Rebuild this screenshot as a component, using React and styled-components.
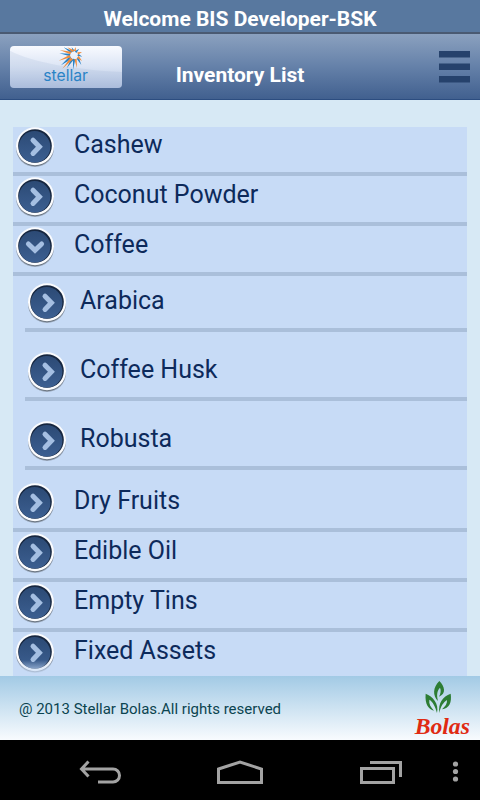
import React, { useState } from 'react'
import styled, { createGlobalStyle } from 'styled-components'

const items = [
  { name: 'Cashew' },
  { name: 'Coconut Powder' },
  { name: 'Coffee', children: ['Arabica', 'Coffee Husk', 'Robusta'] },
  { name: 'Dry Fruits' },
  { name: 'Edible Oil' },
  { name: 'Empty Tins' },
  { name: 'Fixed Assets' },
]

function RoundArrow({ open }) {
  return (
    <ArrowSvg viewBox="0 0 40 42" aria-hidden="true">
      <defs>
        <linearGradient id="disc" x1="0" y1="0" x2="0" y2="1">
          <stop offset="0" stopColor="#2c4a75" />
          <stop offset="1" stopColor="#3c5f91" />
        </linearGradient>
      </defs>
      <circle cx="20" cy="22" r="19" fill="#7b8695" opacity="0.6" />
      <circle cx="20" cy="21.6" r="18.6" fill="#5d6672" opacity="0.8" />
      <circle cx="20" cy="20.2" r="19" fill="#fbfcfe" />
      <circle cx="20" cy="20" r="16.8" fill="#16263f" />
      <circle cx="19.6" cy="20.8" r="15.800" fill="url(#disc)" />
      <Chevron d={open ? 'M13.400 18l6.600 6.200 6.600-6.200' : 'M18 14.200l6.400 6.600-6.400 6.600'} />
    </ArrowSvg>
  )
}

function StellarLogo() {
  return (
    <svg width="112" height="42" viewBox="0 0 336 126" role="img" aria-label="stellar">
      <path d="M0 14C70 50 190 70 336 78V126H0Z" fill="#8fa8d0" opacity="0.16" />
      <path
        fill="#2a83c6"
        d="M161 4L187 15L183 22ZM148 22L181 23L180 31ZM153 58L179 31L186 38ZM170 67L184 37L191 41ZM189 71L189 38L196 40ZM214 57L200 38L206 33ZM217 32L202 29L205 23ZM208 8L199 21L194 16ZM185 4L194 14L188 18Z"
      />
      <path
        fill="#f08c3c"
        d="M172 4L192 13L187 19ZM149 12L184 17L181 25ZM146 44L178 27L183 34ZM157 68L181 35L189 40ZM201 66L193 40L200 38ZM216 45L201 36L206 29ZM216 18L204 26L202 19ZM197 3L198 16L191 15Z"
      />
      <LogoText x="100" y="104">stellar</LogoText>
    </svg>
  )
}

function BolasLogo() {
  return (
    <svg width="62" height="64" viewBox="0 0 186 192" role="img" aria-label="Bolas">
      <g transform="translate(-6 5)" fill="#2d7d34" fillRule="evenodd">
        <path d="M88 10C68 30 68 54 84 70C80 54 80 40 90 30C94 38 92 48 87 57C110 48 104 26 88 10Z" />
        <path d="M47 48C44 80 56 94 72 99C62 88 56 78 58 66C68 72 76 86 81 106C88 78 68 56 47 48Z" />
        <path d="M122 48C98 56 84 76 88 106C92 86 100 74 111 67C112 78 106 86 96 95C118 92 126 74 122 48Z" />
      </g>
      <BolasText x="8" y="173">Bolas</BolasText>
    </svg>
  )
}

function App() {
  const [opened, setOpened] = useState('Coffee')

  return (
    <Screen>
      <GlobalStyle />
      <Welcome>Welcome BIS Developer-BSK</Welcome>
      <Header>
        <LogoButton>
          <StellarLogo />
        </LogoButton>
        <Title>Inventory List</Title>
        <MenuButton aria-label="Menu">
          <svg width="32" height="34" viewBox="0 0 32 34">
            <path d="M1 1h31v6.500H1zM1 13.500h31v6.500H1zM1 26h31v6.500H1z" fill="#26426c" />
          </svg>
        </MenuButton>
      </Header>
      <Main>
        <ListView>
          <List>
            {items.map((item) => (
              <li key={item.name}>
                <Row onClick={() => setOpened(opened === item.name ? '' : item.name)}>
                  <RoundArrow open={!!item.children && opened === item.name} />
                  <Label>{item.name}</Label>
                </Row>
                {item.children && opened === item.name && (
                  <SubList>
                    {item.children.map((child) => (
                      <li key={child}>
                        <Row>
                          <RoundArrow />
                          <Label $sub>{child}</Label>
                        </Row>
                      </li>
                    ))}
                  </SubList>
                )}
              </li>
            ))}
          </List>
        </ListView>
      </Main>
      <Footer>
        <p>@ 2013 Stellar Bolas.All rights reserved</p>
        <BolasLogo />
      </Footer>
      <SystemBar>
        <SystemButton aria-label="Back">
          <svg width="44" height="26" viewBox="0 0 44 26">
            <path d="M10.500 2.500l-7 7.500 7 7.500M3.500 10H35a6 6 0 0 1 0 13H20" />
          </svg>
        </SystemButton>
        <SystemButton aria-label="Home">
          <svg width="48" height="26" viewBox="0 0 48 26">
            <path d="M2.500 10L24 3l21.500 7v13.500h-43z" />
          </svg>
        </SystemButton>
        <SystemButton aria-label="Recent apps">
          <svg width="44" height="26" viewBox="0 0 44 26">
            <path d="M3.500 9.500h32v14h-32zM12 3.500h30.500v14.500" />
          </svg>
        </SystemButton>
        <SystemButton aria-label="More">
          <Dots width="10" height="24" viewBox="0 0 10 24">
            <circle cx="5.500" cy="4" r="2.600" />
            <circle cx="5.500" cy="11.500" r="2.600" />
            <circle cx="5.500" cy="19" r="2.600" />
          </Dots>
        </SystemButton>
      </SystemBar>
    </Screen>
  )
}

export default App

const GlobalStyle = createGlobalStyle`
* {
  box-sizing: border-box;
}
body {
  margin: 0;
  font-family: Roboto, 'Liberation Sans', sans-serif;
}
button {
  border: 0;
  padding: 0;
  background: none;
  font: inherit;
  color: inherit;
  cursor: pointer;
}
svg {
  display: block;
}
`;
const Screen = styled.div`
  display: flex;
  flex-direction: column;
  height: 100vh;
  background: #d7e9f5;
`;
const Welcome = styled.div`
  height: 34px;
  padding-top: 5px;
  border-bottom: 2px solid #4a5a72;
  background: #58789f;
  color: #fff;
  font-size: 21px;
  font-weight: 700;
  line-height: 28px;
  text-align: center;
`;
const Header = styled.header`
  display: grid;
  grid-template-columns: 1fr auto 1fr;
  align-items: center;
  height: 66px;
  padding: 0 10px;
  border-bottom: 1px solid #2c4d80;
  background: linear-gradient(#8ba1bf, #6581a9 50%, #41608f);
`;
const LogoButton = styled.button`
  justify-self: start;
  overflow: hidden;
  border-radius: 4px;
  background: linear-gradient(#f8faff, #dbe4f4 50%, #b0c1df);
`;
const LogoText = styled.text`
  fill: #2a83c6;
  font-family: Inter, sans-serif;
  font-size: 47px;
`;
const Title = styled.h1`
  margin: 0;
  padding-top: 16px;
  color: #fff;
  font-size: 21px;
  font-weight: 700;
  line-height: 28px;
`;
const MenuButton = styled.button`
  justify-self: end;
`;
const Main = styled.main`
  display: flex;
  flex: 1;
  min-height: 0;
  padding: 27px 13px 0;
`;
const ListView = styled.div`
  position: relative;
  flex: 1;
  overflow: hidden;
  background: #c7dbf6;
  &::after {
    content: "";
    position: absolute;
    left: 0;
    right: 0;
    bottom: 0;
    height: 16px;
    background: linear-gradient(rgba(199, 219, 246, 0), #c7dbf6);
  }
`;
const List = styled.ul`
  list-style: none;
  margin: -1px 0 0;
  padding: 0;
`;
const SubList = styled.ul`
  display: grid;
  gap: 19px;
  list-style: none;
  margin: 0;
  padding: 6px 0 12px 12px;
`;
const Row = styled.button`
  display: flex;
  align-items: flex-start;
  width: 100%;
  height: 50px;
  padding-left: 2px;
  border-bottom: 4px solid #aabfda;
  text-align: left;
`;
const ArrowSvg = styled.svg`
  width: 40px;
  height: 42px;
`;
const Chevron = styled.path`
  fill: none;
  stroke: #a5bfe2;
  stroke-width: 5;
  stroke-linecap: round;
`;
const Label = styled.span`
  padding-left: ${(props) => (props.$sub ? '13px' : '19px')};
  color: #0d2a5b;
  font-size: 25px;
  line-height: 38px;
`;
const Footer = styled.footer`
  display: flex;
  justify-content: space-between;
  height: 64px;
  padding: 0 6px 0 19px;
  background: linear-gradient(#a2cae5, #f8fbfe);
  color: #0b4450;
  font-size: 15px;
  line-height: 66px;
  p {
    margin: 0;
  }
`;
const BolasText = styled.text`
  fill: #e02a12;
  font-family: 'Liberation Serif', serif;
  font-size: 71px;
  font-style: italic;
  font-weight: 700;
`;
const SystemBar = styled.nav`
  display: grid;
  grid-template-columns: repeat(3, 1fr) 30px;
  height: 60px;
  padding-left: 30px;
  background: #000;
`;
const SystemButton = styled.button`
  display: grid;
  align-items: center;
  justify-content: center;
  padding-top: 3px;
  path {
    fill: none;
    stroke: #a3a3a3;
    stroke-width: 3;
  }
`;
const Dots = styled.svg`
  margin-right: 20px;
  fill: #a3a3a3;
`;
